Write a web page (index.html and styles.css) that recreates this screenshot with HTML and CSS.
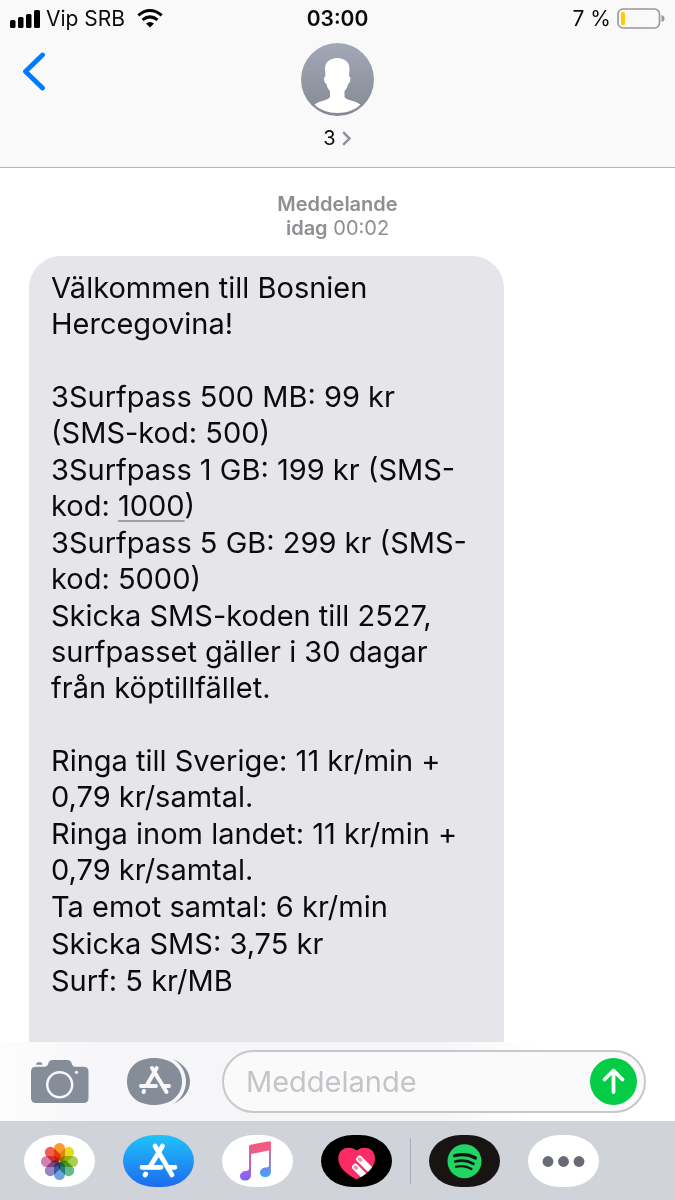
FILE: index.html
```html
<!DOCTYPE html>
<html lang="sv">
<head>
    <meta charset="UTF-8">
    <meta name="viewport" content="width=device-width, initial-scale=1.0">
    <title>Meddelanden</title>
    <link rel="stylesheet" href="styles.css">
</head>
<body>
    <header class="header">
        <div class="status-bar">
            <div class="status-left">
                <svg class="signal" width="30" height="18" viewBox="0 0 30 18">
                    <rect x="0" y="10" width="5.5" height="8" rx="1.5"/>
                    <rect x="8" y="7" width="5.5" height="11" rx="1.5"/>
                    <rect x="16" y="4" width="5.5" height="14" rx="1.5"/>
                    <rect x="24" y="0" width="6" height="18" rx="1.5"/>
                </svg>
                <span>Vip SRB</span>
                <svg class="wifi" width="26" height="19" viewBox="0 0 26 19">
                    <path d="M1.3 6.3Q13-3.2 24.700 6.3M5.500 10.900Q13 4.900 20.500 10.900" fill="none" stroke="#000" stroke-width="3"/>
                    <path d="M9 14.500Q13 11.500 17 14.500L13 18.500Z"/>
                </svg>
            </div>
            <div class="clock">03:00</div>
            <div class="status-right">
                <span>7 %</span>
                <svg width="48" height="21" viewBox="0 0 48 21">
                    <rect x="1" y="1" width="41.5" height="19" rx="5" fill="none" stroke="#98989b" stroke-width="1.6"/>
                    <rect x="4" y="4" width="4" height="13" rx="1.5" fill="#ffcc00"/>
                    <path d="M44.5 7Q47.5 8 47.5 10.5T44.5 14Z" fill="#98989b"/>
                </svg>
            </div>
        </div>

        <div class="nav">
            <button type="button" class="back" aria-label="Tillbaka">
                <svg width="24" height="40" viewBox="0 0 24 40">
                    <path d="M20.5 3L3.5 19.5L20.5 36" fill="none" stroke="#007aff" stroke-width="4.8" stroke-linecap="round" stroke-linejoin="round"/>
                </svg>
            </button>
            <button type="button" class="contact">
                <svg width="73" height="73" viewBox="0 0 73 73">
                    <defs>
                        <linearGradient id="avatarFill" x1="0" y1="0" x2="0" y2="1">
                            <stop offset="0" stop-color="#a3a8b7"/>
                            <stop offset="1" stop-color="#858994"/>
                        </linearGradient>
                    </defs>
                    <circle cx="36.5" cy="36.5" r="36.5" fill="url(#avatarFill)"/>
                    <path d="M36 15C43 15 48.500 18.500 48.500 26L48 33.500C50.500 33.500 49.500 40 47 41C46.500 44 45.500 46 43.500 48L43.500 54C45 57 54 57.500 59.500 61.500C54 67 46 70 36.500 70S19 67 13.500 61.500C19 57.500 27.500 57 29 54L29 48C27 46 26 44 25.500 41C23 40 22 33.500 24.500 33.500L24 26C24 18.500 29 15.500 36 15Z" fill="#fff"/>
                </svg>
                <span class="contact-name">3
                    <svg width="10" height="15" viewBox="0 0 10 15">
                        <path d="M2 2L7.5 7.5L2 13" fill="none" stroke="#8e939b" stroke-width="2.5" stroke-linecap="square"/>
                    </svg>
                </span>
            </button>
        </div>
    </header>

    <main class="messages">
        <div class="timestamp"><b>Meddelande<br>idag</b> 00:02</div>
        <div class="bubble">
            <div class="group">
                <p>Välkommen till Bosnien<br>Hercegovina!</p>
            </div>
            <div class="group">
                <p>3Surfpass 500 MB: 99 kr<br>(SMS-kod: 500)</p>
                <p>3Surfpass 1 GB: 199 kr (SMS-<br>kod: <a href="tel:1000">1000</a>)</p>
                <p>3Surfpass 5 GB: 299 kr (SMS-<br>kod: 5000)</p>
                <p>Skicka SMS-koden till 2527,<br>surfpasset gäller i 30 dagar<br>från köptillfället.</p>
            </div>
            <div class="group">
                <p>Ringa till Sverige: 11 kr/min +<br>0,79 kr/samtal.</p>
                <p>Ringa inom landet: 11 kr/min +<br>0,79 kr/samtal.</p>
                <p>Ta emot samtal: 6 kr/min</p>
                <p>Skicka SMS: 3,75 kr</p>
                <p>Surf: 5 kr/MB</p>
            </div>
        </div>
    </main>

    <form class="composer">
        <button type="button" aria-label="Kamera">
            <svg width="58" height="43" viewBox="0 0 58 43">
                <path d="M5 6.700H13C16 6.700 16.500 5.500 17.500 3Q18.500 0 21.500 0H36.500Q39.500 0 40.500 3C41.500 5.500 42 6.700 45 6.700H52.500Q57.500 6.700 57.500 11.700V38Q57.500 43 52.500 43H5Q0 43 0 38V11.700Q0 6.700 5 6.700Z" fill="#848d98"/>
                <path d="M5 4.800Q5 2.300 7 2.300H9.500Q11.500 2.300 11.500 4.800Z" fill="#848d98"/>
                <circle cx="28.7" cy="24.7" r="12.5" fill="none" stroke="#f8f8fa" stroke-width="2.5"/>
                <circle cx="45.5" cy="12.3" r="1.6" fill="#f8f8fa"/>
            </svg>
        </button>
        <button type="button" aria-label="Appar">
            <svg width="63" height="47" viewBox="0 0 63 47">
                <path d="M27 0C43 0 55 9 55 23.500S43 47 27 47S0 38 0 23.500S11 0 27 0Z" fill="#848d98"/>
                <path d="M46 1C57 6 63 14 63 23.500S57 41 46 46C54 41 59 33 59 23.500S54 6 46 1Z" fill="#848d98"/>
                <g stroke="#f8f8fa" stroke-width="4" stroke-linecap="round" fill="none">
                    <path d="M29.700 10L20 27M17 33L16.500 34M25 10L39.500 34M14 28H29M38 28H42"/>
                </g>
            </svg>
        </button>
        <div class="field">
            <input type="text" placeholder="Meddelande" aria-label="Meddelande">
            <button type="submit" class="send" aria-label="Skicka">
                <svg width="47" height="47" viewBox="0 0 47 47">
                    <path d="M23.500 34V13M14.500 21.500L23.500 12.500L32.500 21.500" fill="none" stroke="#fff" stroke-width="3.8" stroke-linecap="round" stroke-linejoin="round"/>
                </svg>
            </button>
        </div>
    </form>

    <nav class="app-strip">
        <button type="button" class="app" aria-label="Bilder">
            <svg width="71" height="52" viewBox="0 0 71 52">
                <g class="petals" transform="translate(35.5 26.5)">
                    <rect x="-5.5" y="-18.5" width="11" height="18" rx="5.5" fill="#fa9a2c"/>
                    <rect x="-5.5" y="-18.5" width="11" height="18" rx="5.5" fill="#e6dc1e" transform="rotate(45)"/>
                    <rect x="-5.5" y="-18.5" width="11" height="18" rx="5.5" fill="#a5cf4c" transform="rotate(90)"/>
                    <rect x="-5.5" y="-18.5" width="11" height="18" rx="5.5" fill="#63bd85" transform="rotate(135)"/>
                    <rect x="-5.5" y="-18.5" width="11" height="18" rx="5.5" fill="#6ba6db" transform="rotate(180)"/>
                    <rect x="-5.5" y="-18.5" width="11" height="18" rx="5.5" fill="#9784c3" transform="rotate(225)"/>
                    <rect x="-5.5" y="-18.5" width="11" height="18" rx="5.5" fill="#d480ae" transform="rotate(270)"/>
                    <rect x="-5.5" y="-18.5" width="11" height="18" rx="5.5" fill="#f0604c" transform="rotate(315)"/>
                </g>
            </svg>
        </button>
        <button type="button" class="app app-store" aria-label="App Store">
            <svg width="71" height="52" viewBox="0 0 71 52">
                <path d="M39.500 11L27.500 31M22.700 39L22 40M32 11L49 40M19 32.300H38M47 32.300H52" fill="none" stroke="#fff" stroke-width="4.8" stroke-linecap="round"/>
            </svg>
        </button>
        <button type="button" class="app" aria-label="Musik">
            <svg width="71" height="52" viewBox="0 0 71 52">
                <defs>
                    <linearGradient id="noteLeft" gradientUnits="userSpaceOnUse" x1="0" y1="7" x2="0" y2="45">
                        <stop offset="0" stop-color="#fb5573"/>
                        <stop offset="0.35" stop-color="#e0619b"/>
                        <stop offset="1" stop-color="#7c63ff"/>
                    </linearGradient>
                    <linearGradient id="noteRight" gradientUnits="userSpaceOnUse" x1="0" y1="7" x2="0" y2="42">
                        <stop offset="0" stop-color="#fb5573"/>
                        <stop offset="0.35" stop-color="#c069b5"/>
                        <stop offset="1" stop-color="#3ba4fc"/>
                    </linearGradient>
                </defs>
                <path d="M47 14H48.900V37C48.900 40 46.500 42 43 42C40 42 38 40.500 38 37.800C38 34.500 41 32.500 44 32.500Q47 32.500 47 30Z" fill="url(#noteRight)"/>
                <path d="M27 11Q27 10 28.500 9.700L47.500 6.300Q48.900 6.300 48.900 7.500V15L29 19V40C29 43.500 26.500 45.500 23.300 45.500C20 45.500 18 44 18 41.200C18 38 21 36 24 36Q27 36 27 33Z" fill="url(#noteLeft)"/>
            </svg>
        </button>
        <button type="button" class="app app-touch" aria-label="Digital Touch">
            <svg width="71" height="52" viewBox="0 0 71 52">
                <clipPath id="heart">
                    <path d="M35.700 15.500C41 10.500 54 11.500 54 23.500C54 33 44 40 35.700 44.500C27 40 17.300 33 17.300 23.500C17.300 11.500 30.500 10.500 35.700 15.500Z"/>
                </clipPath>
                <g clip-path="url(#heart)">
                    <rect width="71" height="52" fill="#fb2c65"/>
                    <path d="M38.500 24L52 37.500M34.300 32L46 43.700" stroke="#fff" stroke-width="6.500" stroke-linecap="round"/>
                    <path d="M38.500 24L39.500 25M34.300 32L35.300 33" stroke="#f58cae" stroke-width="3.500" stroke-linecap="round"/>
                </g>
            </svg>
        </button>
        <span class="divider"></span>
        <button type="button" class="app app-spotify" aria-label="Spotify">
            <svg width="71" height="52" viewBox="0 0 71 52">
                <circle cx="35.5" cy="26.3" r="17" fill="#1fd662"/>
                <path d="M25.500 20.800Q37 17.800 46.500 23" stroke-width="3.200"/>
                <path d="M26.200 26.500Q36 23.800 44.500 28.800" stroke-width="2.700"/>
                <path d="M27 31.800Q35.500 29.500 42.500 34" stroke-width="2.200"/>
            </svg>
        </button>
        <button type="button" class="app" aria-label="Mer">
            <svg width="71" height="52" viewBox="0 0 71 52" fill="#686b76">
                <circle cx="20" cy="26.5" r="5.4"/>
                <circle cx="35.5" cy="26.5" r="5.4"/>
                <circle cx="51" cy="26.5" r="5.4"/>
            </svg>
        </button>
    </nav>
</body>
</html>
```

FILE: styles.css
```css
* {
    box-sizing: border-box;
}

body {
    margin: 0;
    height: 100vh;
    display: flex;
    flex-direction: column;
    background: #fff;
    color: #0b0b0d;
    font-family: Inter, "Liberation Sans", sans-serif;
}

button {
    display: block;
    padding: 0;
    border: none;
    background: none;
    color: inherit;
    font: inherit;
    cursor: pointer;
}

svg {
    display: block;
}

/* header */
.header {
    background: #f9f9f9;
    border-bottom: 1px solid #b4b4b6;
}

.status-bar {
    display: grid;
    grid-template-columns: 1fr auto 1fr;
    align-items: center;
    height: 37px;
    padding: 0 10px;
    font-size: 21px;
    line-height: 24px;
}

.status-left,
.status-right {
    display: flex;
    align-items: center;
    gap: 6px;
}

.status-right {
    justify-content: flex-end;
}

.wifi {
    margin-left: 6px;
}

.clock {
    font-weight: 600;
}

.nav {
    display: grid;
    grid-template-columns: 1fr auto 1fr;
    align-items: start;
    padding: 6px 22px 17px;
}

.back {
    justify-self: start;
    margin-top: 9px;
}

.contact {
    display: flex;
    flex-direction: column;
    align-items: center;
    gap: 10px;
}

.contact-name {
    display: flex;
    align-items: center;
    gap: 6px;
    font-size: 20px;
    line-height: 24px;
}

/* conversation */
.messages {
    flex: 1;
    min-height: 0;
    overflow: hidden;
    display: flex;
    flex-direction: column;
    padding: 24px 29px 0;
}

.timestamp {
    margin-bottom: 16px;
    color: #8e8e93;
    font-size: 20px;
    line-height: 24px;
    text-align: center;
}

.timestamp b {
    font-weight: 600;
}

.bubble {
    flex: 1 0 auto;
    width: 77%;
    padding: 14px 22px;
    border-radius: 32px 32px 0 0;
    background: #e5e5ea;
    font-size: 29px;
    line-height: 36px;
}

.group + .group {
    margin-top: 37px;
}

.bubble p {
    margin: 0;
}

.bubble p + p {
    margin-top: 1px;
}

.bubble a {
    color: inherit;
    text-decoration: underline;
    text-decoration-color: #a0a0a6;
    text-decoration-thickness: 2px;
    text-underline-offset: 4px;
}

/* input row */
.composer {
    display: flex;
    align-items: center;
    gap: 38px;
    height: 79px;
    padding: 0 29px 0 31px;
    background: linear-gradient(90deg, #fdfdfd, #f6f6f9 15%, #f6f6f9 65%, #fff 80%);
}

.field {
    flex: 1;
    min-width: 0;
    display: flex;
    align-items: center;
    height: 63px;
    margin-left: -6px;
    padding: 0 7px 0 22px;
    border: 2px solid #c7c7cc;
    border-radius: 32px;
    background: #fafafa;
}

.field input {
    flex: 1;
    min-width: 0;
    padding: 0;
    border: none;
    outline: none;
    background: none;
    font-family: inherit;
    font-size: 29px;
    line-height: 36px;
}

.field input::placeholder {
    color: #c4c4c9;
    opacity: 1;
}

.send {
    border-radius: 50%;
    background: #04cc47;
}

/* app drawer */
.app-strip {
    display: flex;
    align-items: center;
    gap: 28px;
    height: 79px;
    padding: 0 24px;
    background: #d0d3da;
}

.app {
    overflow: hidden;
    border-radius: 32px / 26px;
    background: #fff;
}

.petals rect {
    mix-blend-mode: multiply;
}

.app-store {
    background: linear-gradient(#1fc3f8, #1d6bf2);
}

.app-touch {
    background: #000;
}

.app-spotify {
    background: #191414;
}

.app-spotify path {
    fill: none;
    stroke: #191414;
    stroke-linecap: round;
}

.divider {
    width: 1px;
    height: 46px;
    margin: 0 -10px;
    background: #a9acb4;
}
```
